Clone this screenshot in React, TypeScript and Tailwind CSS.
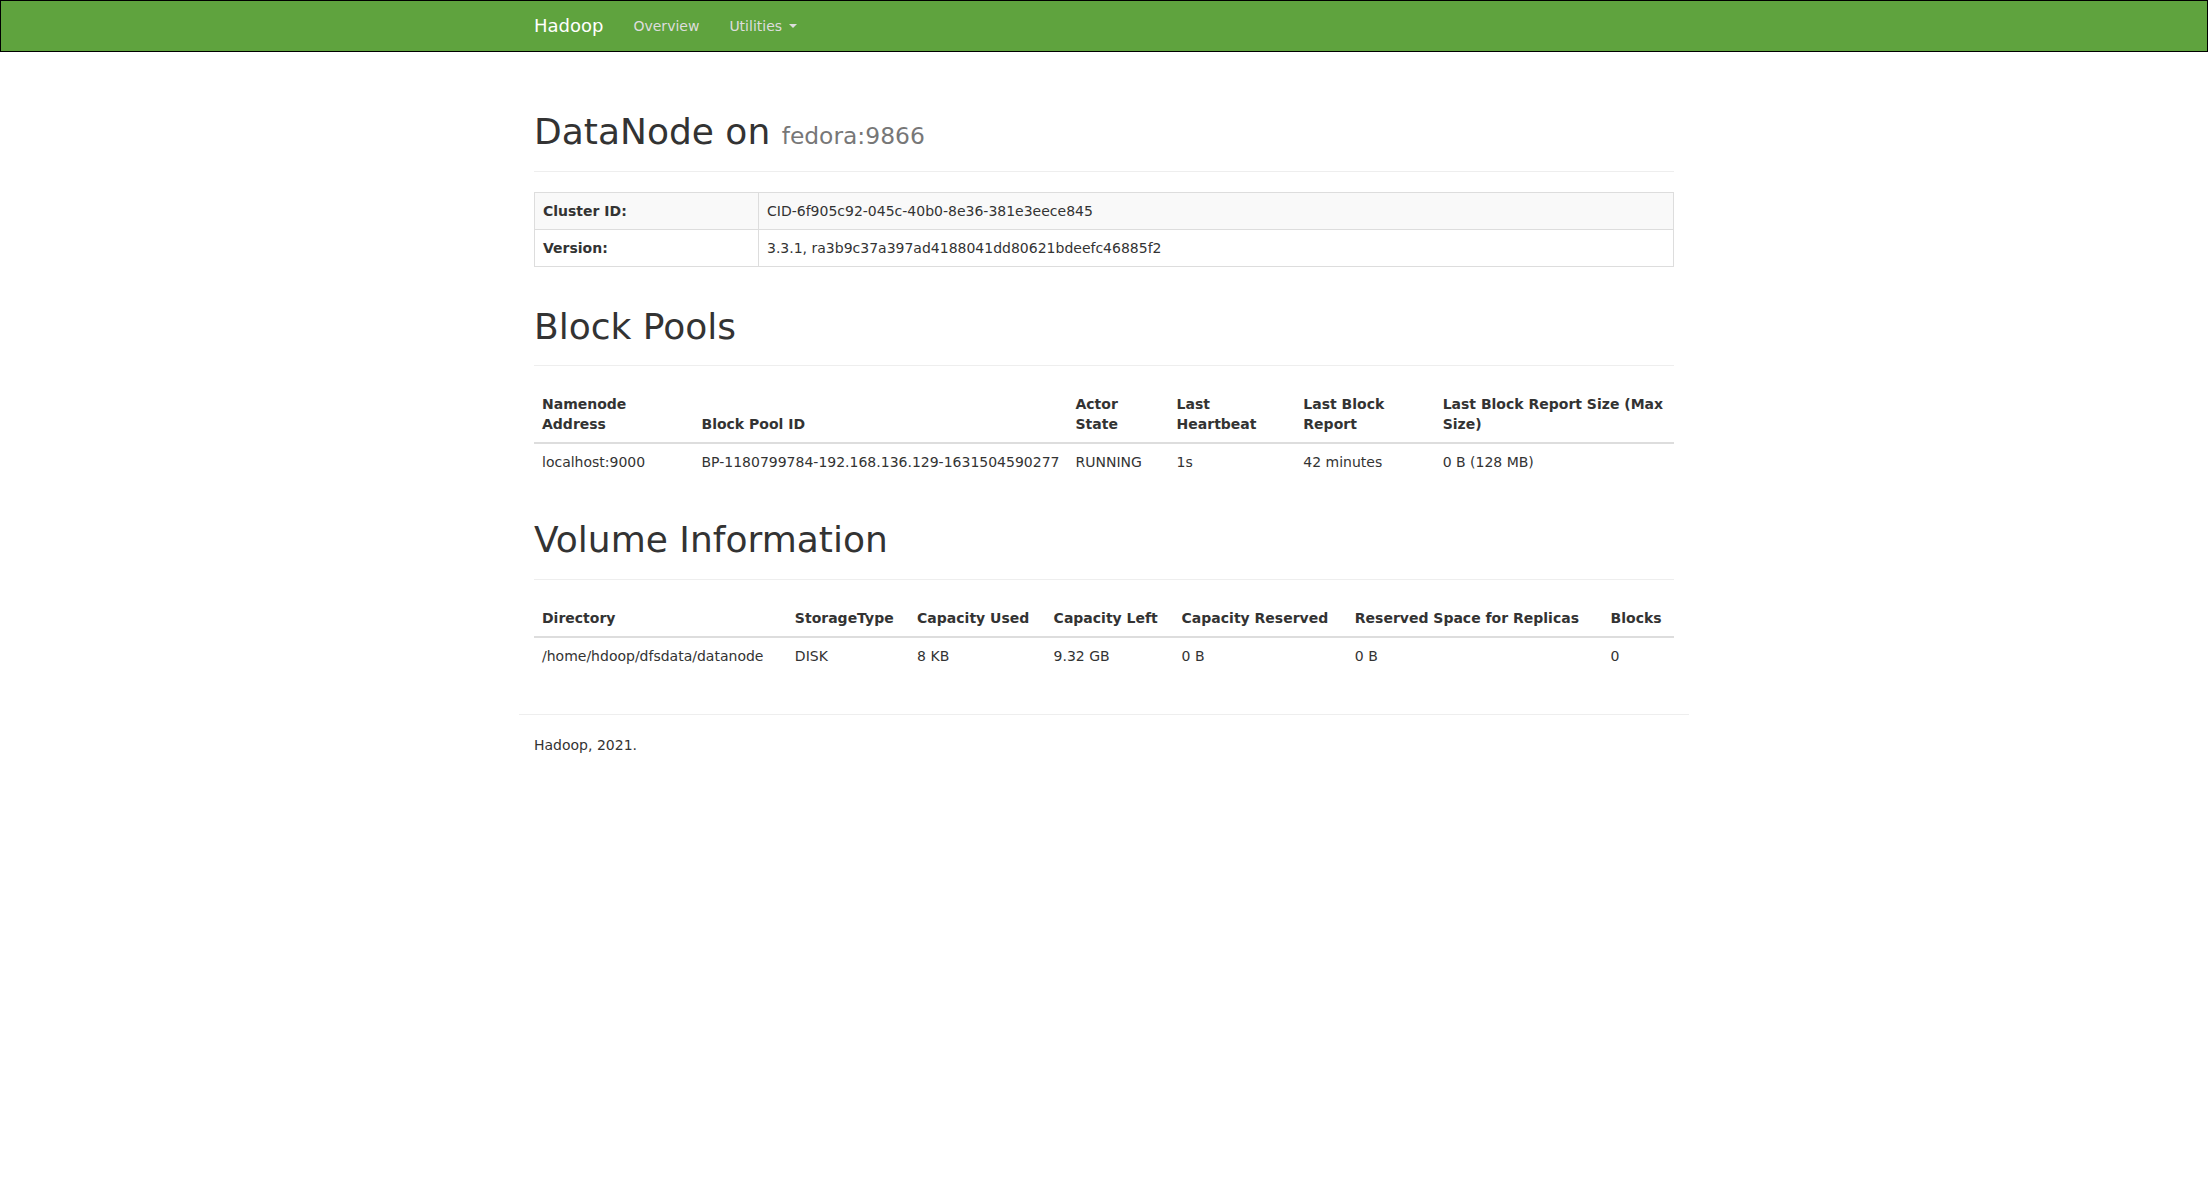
import React from "react";

const th = "p-2 text-left align-bottom font-bold border-b-2 border-[#ddd]";
const td = "p-2 align-top border-t border-[#ddd]";

export default function App() {
  return (
    <div className="min-h-screen bg-white font-['DejaVu_Sans',sans-serif] text-[14px] leading-[20px] text-[#333]">
      <nav className="mb-5 h-[52px] border border-black bg-[#5fa33e]">
        <div className="mx-auto flex w-[1170px] px-[15px]">
          <a className="-ml-[15px] block h-[50px] p-[15px] text-[18px] leading-[20px] text-white">Hadoop</a>
          <ul className="flex">
            <li>
              <a className="block p-[15px] leading-[20px] text-[#ddd]">Overview</a>
            </li>
            <li>
              <a className="flex items-center p-[15px] leading-[20px] text-[#ddd]">
                Utilities&nbsp;
                <span className="ml-[2px] inline-block h-0 w-0 border-x-4 border-t-4 border-x-transparent border-t-[#ddd]" />
              </a>
            </li>
          </ul>
        </div>
      </nav>

      <div className="mx-auto flex w-[1170px] flex-col px-[15px]">
        <div className="mt-10 border-b border-[#eee] pb-[19px]">
          <h1 className="text-[36px] leading-[39.6px] font-medium">
            DataNode on <small className="text-[23.4px] leading-none font-normal text-[#777]">fedora:9866</small>
          </h1>
        </div>

        <table className="mt-5 w-full border-collapse border border-[#ddd]">
          <tbody>
            <tr className="bg-[#f9f9f9]">
              <th className="w-[224px] border border-[#ddd] p-2 text-left align-top font-bold">Cluster ID:</th>
              <td className="border border-[#ddd] p-2 align-top">CID-6f905c92-045c-40b0-8e36-381e3eece845</td>
            </tr>
            <tr>
              <th className="border border-[#ddd] p-2 text-left align-top font-bold">Version:</th>
              <td className="border border-[#ddd] p-2 align-top">3.3.1, ra3b9c37a397ad4188041dd80621bdeefc46885f2</td>
            </tr>
          </tbody>
        </table>

        <div className="mt-10 border-b border-[#eee] pb-[19px]">
          <h1 className="text-[36px] leading-[39.6px] font-medium">Block Pools</h1>
        </div>

        <table className="mt-5 w-full border-collapse">
          <thead>
            <tr>
              <th className={th}>Namenode Address</th>
              <th className={th}>Block Pool ID</th>
              <th className={th}>Actor State</th>
              <th className={th}>Last Heartbeat</th>
              <th className={th}>Last Block Report</th>
              <th className={th}>Last Block Report Size (Max Size)</th>
            </tr>
          </thead>
          <tbody>
            <tr>
              <td className={td}>localhost:9000</td>
              <td className={td + " whitespace-nowrap"}>BP-1180799784-192.168.136.129-1631504590277</td>
              <td className={td}>RUNNING</td>
              <td className={td}>1s</td>
              <td className={td}>42 minutes</td>
              <td className={td}>0 B (128 MB)</td>
            </tr>
          </tbody>
        </table>

        <div className="mt-10 border-b border-[#eee] pb-[19px]">
          <h1 className="text-[36px] leading-[39.6px] font-medium">Volume Information</h1>
        </div>

        <table className="mt-5 w-full border-collapse">
          <thead>
            <tr>
              <th className={th}>Directory</th>
              <th className={th}>StorageType</th>
              <th className={th}>Capacity Used</th>
              <th className={th}>Capacity Left</th>
              <th className={th}>Capacity Reserved</th>
              <th className={th}>Reserved Space for Replicas</th>
              <th className={th}>Blocks</th>
            </tr>
          </thead>
          <tbody>
            <tr>
              <td className={td}>/home/hdoop/dfsdata/datanode</td>
              <td className={td}>DISK</td>
              <td className={td}>8 KB</td>
              <td className={td}>9.32 GB</td>
              <td className={td}>0 B</td>
              <td className={td}>0 B</td>
              <td className={td}>0</td>
            </tr>
          </tbody>
        </table>

        <div className="-mx-[15px] mt-10">
          <hr className="border-t border-[#eee]" />
          <div className="mt-5 px-[15px]">
            <p className="mb-[10px]">Hadoop, 2021.</p>
          </div>
        </div>
      </div>
    </div>
  );
}
